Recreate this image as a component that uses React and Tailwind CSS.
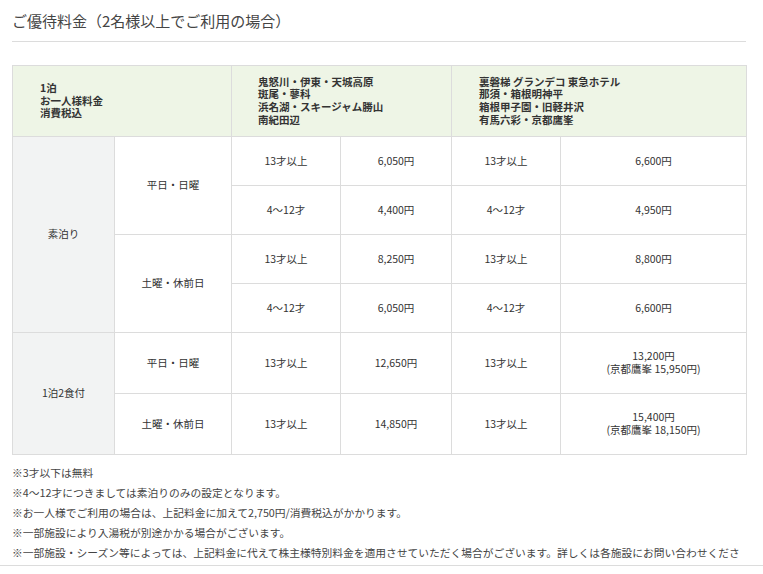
const font = { fontFamily: '"Noto Sans CJK JP", "Noto Sans", sans-serif' };

const Cell = ({ children, className = "", ...rest }) => (
  <td
    {...rest}
    className={`border border-[#dcdcdc] text-center align-middle text-[10.5px] leading-[12.6px] text-[#333] ${className}`}
  >
    {children}
  </td>
);

const notes = [
  "※3才以下は無料",
  "※4〜12才につきましては素泊りのみの設定となります。",
  "※お一人様でご利用の場合は、上記料金に加えて2,750円/消費税込がかかります。",
  "※一部施設により入湯税が別途かかる場合がございます。",
  "※一部施設・シーズン等によっては、上記料金に代えて株主様特別料金を適用させていただく場合がございます。詳しくは各施設にお問い合わせください。",
];

export default function App() {
  return (
    <div className="min-h-[574px] bg-white" style={font}>
      <div className="ml-[12px] w-[734px]">
        {/* heading */}
        <div className="h-[42px] border-b border-[#dcdcdc] pt-[10px]">
          <h2 className="text-[15px] leading-[22px] font-normal text-[#444]">
            ご優待料金（2名様以上でご利用の場合）
          </h2>
        </div>

        <table className="mt-[23px] w-[734px] table-fixed border-collapse">
          <colgroup>
            <col className="w-[102px]" />
            <col className="w-[117px]" />
            <col className="w-[109px]" />
            <col className="w-[111px]" />
            <col className="w-[109px]" />
            <col className="w-[186px]" />
          </colgroup>
          <thead>
            <tr className="h-[71px] bg-[#eef5e6]">
              <Cell colSpan={2} className="pl-[27px] text-left font-bold text-[#222] leading-[11.7px]">
                1泊
                <br />
                お一人様料金
                <br />
                消費税込
              </Cell>
              <Cell colSpan={2} className="pl-[26px] text-left font-bold text-[#222] leading-[12.3px]">
                鬼怒川・伊東・天城高原
                <br />
                斑尾・蓼科
                <br />
                浜名湖・スキージャム勝山
                <br />
                南紀田辺
              </Cell>
              <Cell colSpan={2} className="pl-[27px] text-left font-bold text-[#222] leading-[12.3px]">
                裏磐梯 グランデコ 東急ホテル
                <br />
                那須・箱根明神平
                <br />
                箱根甲子園・旧軽井沢
                <br />
                有馬六彩・京都鷹峯
              </Cell>
            </tr>
          </thead>
          <tbody>
            <tr className="h-[49px]">
              <Cell rowSpan={4} className="bg-[#f2f3f3]">素泊り</Cell>
              <Cell rowSpan={2}>平日・日曜</Cell>
              <Cell>13才以上</Cell>
              <Cell>6,050円</Cell>
              <Cell>13才以上</Cell>
              <Cell>6,600円</Cell>
            </tr>
            <tr className="h-[49px]">
              <Cell>4〜12才</Cell>
              <Cell>4,400円</Cell>
              <Cell>4〜12才</Cell>
              <Cell>4,950円</Cell>
            </tr>
            <tr className="h-[49px]">
              <Cell rowSpan={2}>土曜・休前日</Cell>
              <Cell>13才以上</Cell>
              <Cell>8,250円</Cell>
              <Cell>13才以上</Cell>
              <Cell>8,800円</Cell>
            </tr>
            <tr className="h-[49px]">
              <Cell>4〜12才</Cell>
              <Cell>6,050円</Cell>
              <Cell>4〜12才</Cell>
              <Cell>6,600円</Cell>
            </tr>
            <tr className="h-[61px]">
              <Cell rowSpan={2} className="bg-[#f2f3f3]">1泊2食付</Cell>
              <Cell>平日・日曜</Cell>
              <Cell>13才以上</Cell>
              <Cell>12,650円</Cell>
              <Cell>13才以上</Cell>
              <Cell>
                13,200円
                <br />
                (京都鷹峯 15,950円)
              </Cell>
            </tr>
            <tr className="h-[61px]">
              <Cell>土曜・休前日</Cell>
              <Cell>13才以上</Cell>
              <Cell>14,850円</Cell>
              <Cell>13才以上</Cell>
              <Cell>
                15,400円
                <br />
                (京都鷹峯 18,150円)
              </Cell>
            </tr>
          </tbody>
        </table>

        {/* notes */}
        <ul className="mt-[8px]">
          {notes.map((n) => (
            <li key={n} className="text-[10.75px] leading-[20px] text-[#444]">
              {n}
            </li>
          ))}
        </ul>
      </div>

      {/* bottom bar overlapping the page */}
      <div className="fixed inset-x-0 bottom-0 h-[9px] border-t border-[#dcdcdc] bg-white" />
    </div>
  );
}
